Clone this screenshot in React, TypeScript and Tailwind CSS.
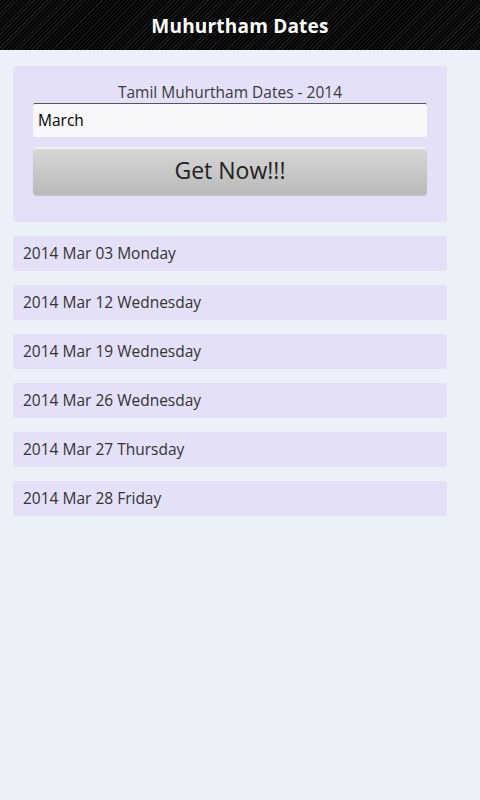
const dates = [
  "2014 Mar 03 Monday",
  "2014 Mar 12 Wednesday",
  "2014 Mar 19 Wednesday",
  "2014 Mar 26 Wednesday",
  "2014 Mar 27 Thursday",
  "2014 Mar 28 Friday",
];

export default function App() {
  return (
    <div
      className="min-h-[800px] w-[480px] bg-[#ecf0f9]"
      style={{ fontFamily: '"Open Sans", "DejaVu Sans", sans-serif' }}
    >
      {/* Header bar with diagonal pinstripes */}
      <div className="flex h-[50px] items-center justify-center bg-[#0b0b0b] bg-[repeating-linear-gradient(135deg,#1a1a1a_0px,#1a1a1a_1px,#050505_1px,#050505_3px)] pt-[3px]">
        <span className="text-[19px] font-bold tracking-[0.2px] text-white">Muhurtham Dates</span>
      </div>

      <div className="flex w-[447px] flex-col gap-[14px] pl-[13px] pt-[16px]">
        {/* Search card */}
        <div className="flex h-[156px] flex-col items-center rounded-[3px] bg-[#e3e0f7] px-[20px] pt-[15px]">
          <div className="text-[15.5px] leading-[22px] text-[#3a3a3a]">Tamil Muhurtham Dates - 2014</div>
          <div className="flex h-[34px] w-full items-center rounded-[2px] border-t border-[#555] bg-[#f8f8fa] px-[5px] text-[15.5px] text-black">
            March
          </div>
          <button
            type="button"
            className="mt-[10px] flex h-[48px] w-full items-center justify-center rounded-[4px] border-t-2 border-[#f0f0f0] bg-gradient-to-b from-[#d6d6d6] via-[#c8c8c8] to-[#b9b9b9] pb-[4px] text-[23px] text-[#222] shadow-[0_1px_1px_rgba(0,0,0,0.15)]"
          >
            Get Now!!!
          </button>
        </div>

        {/* Results */}
        <div className="flex flex-col gap-[14px]">
          {dates.map((d) => (
            <div
              key={d}
              className="flex h-[35px] items-center rounded-[3px] bg-[#e3e0f7] px-[10px] text-[15.5px] text-[#333]"
            >
              {d}
            </div>
          ))}
        </div>
      </div>
    </div>
  );
}
